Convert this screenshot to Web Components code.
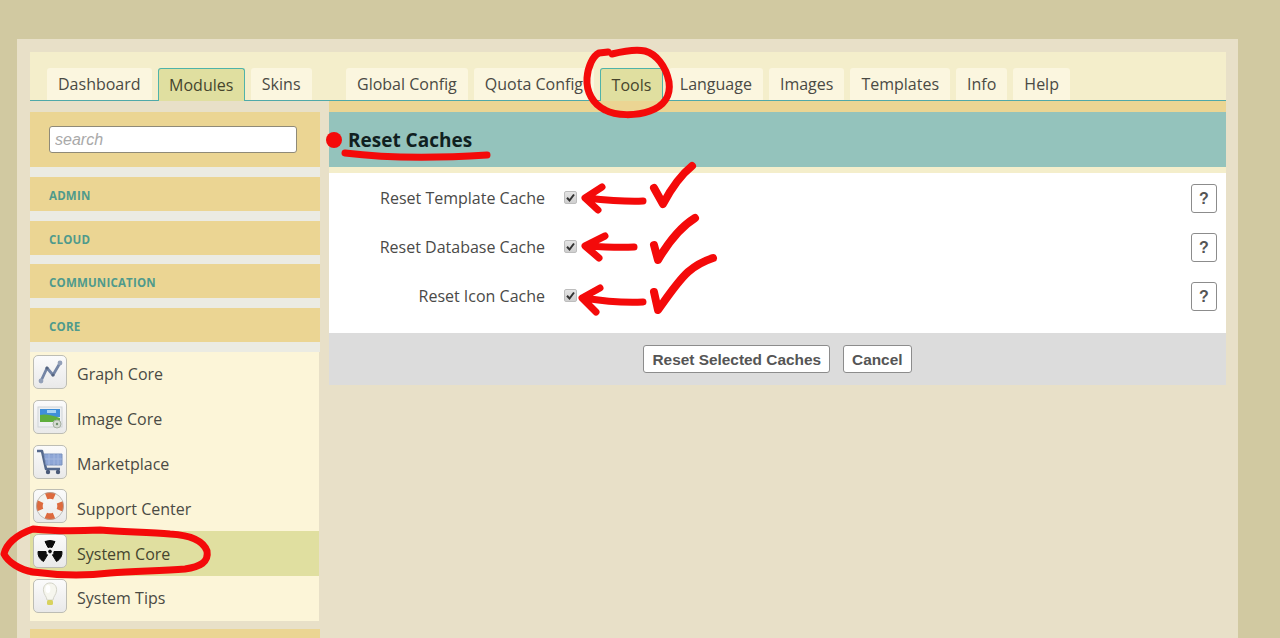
<!DOCTYPE html>
<html>
<head>
<meta charset="utf-8">
<title>Reset Caches</title>
<style>
html, body { margin: 0; height: 638px; overflow: hidden; background: #d1c9a1; }
body { font-family: "Open Sans", "Liberation Sans", sans-serif; color: #444; padding-top: 39px; box-sizing: border-box; }
</style>
</head>
<body>
<admin-shell>
    <tab-bar slot="left-tabs">
        <tab-item>Dashboard</tab-item>
        <tab-item active>Modules</tab-item>
        <tab-item>Skins</tab-item>
    </tab-bar>
    <module-sidebar slot="sidebar">
        <search-box slot="search"></search-box>
        <group-head slot="groups">ADMIN</group-head>
        <group-head slot="groups">CLOUD</group-head>
        <group-head slot="groups">COMMUNICATION</group-head>
        <group-head slot="groups">CORE</group-head>
        <module-item icon="graph">Graph Core</module-item>
        <module-item icon="image">Image Core</module-item>
        <module-item icon="cart">Marketplace</module-item>
        <module-item icon="buoy">Support Center</module-item>
        <module-item icon="radiation" active>System Core</module-item>
        <module-item icon="bulb">System Tips</module-item>
    </module-sidebar>
    <tab-bar slot="right-tabs">
        <tab-item>Global Config</tab-item>
        <tab-item>Quota Config</tab-item>
        <tab-item active>Tools</tab-item>
        <tab-item>Language</tab-item>
        <tab-item>Images</tab-item>
        <tab-item>Templates</tab-item>
        <tab-item>Info</tab-item>
        <tab-item>Help</tab-item>
    </tab-bar>
    <config-panel slot="content" heading="Reset Caches">
        <config-row>Reset Template Cache</config-row>
        <config-row>Reset Database Cache</config-row>
        <config-row>Reset Icon Cache</config-row>
        <push-button slot="actions">Reset Selected Caches</push-button>
        <push-button slot="actions">Cancel</push-button>
    </config-panel>
</admin-shell>
<red-marks></red-marks>

<script>
class adminShell extends HTMLElement {
    constructor() {
        super();
        this.shadowDOM = this.attachShadow({mode: "open"});
    }

    connectedCallback() {
        this.shadowDOM.innerHTML = `
        <style>
        :host {
            display: block;
            box-sizing: border-box;
            width: 1221px;
            height: 599px;
            margin-left: 17px;
            padding: 13px 12px 0 13px;
            background: #e8e0c8;
            overflow: hidden;
        }
        .cols {
            display: grid;
            grid-template-columns: 299px 897px;
        }
        .left-tabs { margin-bottom: 11px; }
        </style>
        <div class="cols">
            <div>
                <div class="left-tabs"><slot name="left-tabs"></slot></div>
                <slot name="sidebar"></slot>
            </div>
            <div>
                <slot name="right-tabs"></slot>
                <slot name="content"></slot>
            </div>
        </div>
        `;
    }
}

class tabBar extends HTMLElement {
    constructor() {
        super();
        this.shadowDOM = this.attachShadow({mode: "open"});
    }

    connectedCallback() {
        this.shadowDOM.innerHTML = `
        <style>
        :host {
            display: flex;
            box-sizing: border-box;
            height: 49px;
            padding-left: 17px;
            gap: 6px;
            align-items: flex-end;
            background: #f4eecb;
            border-bottom: 1px solid #4fa9a9;
        }
        </style>
        <slot></slot>
        `;
    }
}

class tabItem extends HTMLElement {
    constructor() {
        super();
        this.shadowDOM = this.attachShadow({mode: "open"});
    }

    connectedCallback() {
        this.shadowDOM.innerHTML = `
        <style>
        :host {
            display: block;
            box-sizing: border-box;
            height: 32px;
            padding: 0 11px;
            line-height: 32px;
            font-size: 16px;
            color: #4a4a44;
            background: #fbf6df;
            border-radius: 3px 3px 0 0;
            white-space: nowrap;
        }
        :host([active]) {
            height: 33px;
            margin-bottom: -1px;
            padding: 0 10.5px;
            line-height: 33px;
            background: #e0dfa0;
            border: 1px solid #4fb3a9;
            border-bottom: none;
            color: #46452c;
        }
        </style>
        <slot></slot>
        `;
    }
}

class moduleSidebar extends HTMLElement {
    constructor() {
        super();
        this.shadowDOM = this.attachShadow({mode: "open"});
    }

    connectedCallback() {
        this.shadowDOM.innerHTML = `
        <style>
        :host { display: block; width: 290px; }
        .groups {
            display: flex;
            flex-direction: column;
            gap: 9.67px;
            padding: 10px 0;
            background: #ebebe3;
        }
        .items { display: block; margin-right: 1px; background: #fcf5d8; }
        .next { height: 20px; margin-top: 8.2px; background: #ebd593; }
        </style>
        <slot name="search"></slot>
        <div class="groups"><slot name="groups"></slot></div>
        <div class="items"><slot></slot></div>
        <div class="next"></div>
        `;
    }
}

class searchBox extends HTMLElement {
    constructor() {
        super();
        this.shadowDOM = this.attachShadow({mode: "open"});
    }

    connectedCallback() {
        this.shadowDOM.innerHTML = `
        <style>
        :host {
            display: block;
            box-sizing: border-box;
            height: 55px;
            padding: 14px 23px 0 19px;
            background: #ebd593;
        }
        input {
            display: block;
            box-sizing: border-box;
            width: 248px;
            height: 27px;
            padding: 0 5px;
            border: 1px solid #8f8a78;
            border-radius: 3px;
            background: #fff;
            font: italic 16px "Liberation Sans", sans-serif;
            outline: none;
        }
        input::placeholder { color: #a9a9a9; opacity: 1; }
        </style>
        <input type="text" placeholder="search">
        `;
    }
}

class groupHead extends HTMLElement {
    constructor() {
        super();
        this.shadowDOM = this.attachShadow({mode: "open"});
    }

    connectedCallback() {
        this.shadowDOM.innerHTML = `
        <style>
        :host {
            display: block;
            box-sizing: border-box;
            height: 34px;
            padding-left: 19px;
            line-height: 37px;
            font-size: 11.5px;
            font-weight: 700;
            letter-spacing: 0.2px;
            color: #4f9a8c;
            background: #ebd593;
        }
        </style>
        <slot></slot>
        `;
    }
}

const moduleIcons = {
    graph: `<path d="M8 26 L14 13 L20 20 L27 8" fill="none" stroke="#7485a5" stroke-width="2.8" stroke-linejoin="round"/>
            <circle cx="8" cy="26" r="2.4" fill="#93a0b8"/><circle cx="14" cy="13" r="1.6" fill="#55647f"/>
            <circle cx="20" cy="20" r="1.6" fill="#55647f"/><circle cx="27" cy="8" r="2.4" fill="#93a0b8"/>`,
    image: `<rect x="5" y="7" width="24" height="20" fill="#eef0f2" stroke="#cfd3d6"/>
            <rect x="7" y="9" width="20" height="8" fill="#3f8fd8"/>
            <rect x="14" y="10" width="9" height="3" fill="#a7d3f3"/>
            <path d="M7 22 L7 15 Q14 13 27 18 L27 22 Z" fill="#5fae3c"/>
            <circle cx="24" cy="24" r="4" fill="#d5dbd2" stroke="#a7b0a3"/><circle cx="24" cy="24" r="1.2" fill="#6f8f6a"/>`,
    cart: `<path d="M4 6 H9 L13 24 H27" fill="none" stroke="#55698c" stroke-width="2.6" stroke-linejoin="round"/>
            <path d="M11 9 H29 V20 H13 Z" fill="#8ea6d6" stroke="#7b92bd"/>
            <path d="M16 9 V20 M21 9 V20 M25 9 V20 M12 14 H29" stroke="#a3b7de" stroke-width="1"/>
            <circle cx="15" cy="27" r="2.2" fill="#4a5a78"/><circle cx="25" cy="27" r="2.2" fill="#4a5a78"/>`,
    buoy: `<circle cx="17" cy="17" r="10.5" fill="none" stroke="#f2f2ee" stroke-width="6"/>
            <circle cx="17" cy="17" r="10.5" fill="none" stroke="#dd6a3e" stroke-width="6.4" stroke-dasharray="8.5 8" stroke-dashoffset="4.25"/>
            <circle cx="17" cy="17" r="13.6" fill="none" stroke="#a9a9a4" stroke-width=".7"/>`,
    radiation: `<g fill="#0c0c0c" stroke="#0c0c0c" stroke-width="1" stroke-linejoin="round">
            <path d="M12 7.5 Q17 5.5 22 7.5 L19 13.5 Q17 12.6 15 13.5 Z"/>
            <path d="M29 17.5 Q29.5 24 23.5 27.5 L19.5 21 Q21.2 20 21 17.5 Z"/>
            <path d="M5 17.5 Q4.5 24 10.5 27.5 L14.5 21 Q12.8 20 13 17.5 Z"/>
            <circle cx="17" cy="17.5" r="1.4"/></g>`,
    bulb: `<path d="M17 4 C12 4 10 8 10.5 12 C11 16 13.5 17 14 21 H20 C20.5 17 23 16 23.5 12 C24 8 22 4 17 4 Z" fill="#f6f6ee" stroke="#d4d4c8"/>
            <ellipse cx="15" cy="10" rx="2.4" ry="4" fill="#fff"/>
            <rect x="14" y="21" width="6" height="5" rx="1.5" fill="#d8d25e"/>`
};

class moduleItem extends HTMLElement {
    constructor() {
        super();
        this.shadowDOM = this.attachShadow({mode: "open"});
    }

    connectedCallback() {
        this.shadowDOM.innerHTML = `
        <style>
        :host {
            display: flex;
            align-items: center;
            box-sizing: border-box;
            height: 44.8px;
            padding-left: 3px;
            gap: 10px;
            font-size: 16px;
            color: #4a4a44;
        }
        :host([active]) { background: #e0dfa0; color: #45452f; }
        .icon {
            display: block;
            align-self: flex-start;
            box-sizing: border-box;
            width: 34px;
            height: 34px;
            margin-top: 3px;
            border: 1px solid #bdbdb4;
            border-radius: 5px;
            background: linear-gradient(#fbfbfb, #e9e9e9);
            flex: none;
        }
        svg { display: block; margin: -1px; }
        </style>
        <span class="icon"><svg width="34" height="34" viewBox="0 0 34 34">${moduleIcons[this.getAttribute("icon")]}</svg></span>
        <span><slot></slot></span>
        `;
    }
}

class configPanel extends HTMLElement {
    constructor() {
        super();
        this.shadowDOM = this.attachShadow({mode: "open"});
    }

    connectedCallback() {
        this.shadowDOM.innerHTML = `
        <style>
        :host { display: block; }
        .sand { height: 11px; background: #ebd593; }
        h2 {
            margin: 0;
            box-sizing: border-box;
            height: 55px;
            padding-left: 19px;
            line-height: 56px;
            font-size: 19px;
            font-weight: 700;
            color: #10201f;
            background: #94c3bc;
        }
        .cream { height: 6px; background: #f4eecb; }
        .rows { padding: 1px 0 12px; background: #fff; }
        .actions {
            display: flex;
            justify-content: center;
            gap: 13px;
            box-sizing: border-box;
            height: 52px;
            padding-top: 12px;
            background: #dcdcdc;
        }
        </style>
        <div class="sand"></div>
        <h2>${this.getAttribute("heading")}</h2>
        <div class="cream"></div>
        <div class="rows"><slot></slot></div>
        <div class="actions"><slot name="actions"></slot></div>
        `;
    }
}

class configRow extends HTMLElement {
    constructor() {
        super();
        this.shadowDOM = this.attachShadow({mode: "open"});
    }

    connectedCallback() {
        this.shadowDOM.innerHTML = `
        <style>
        :host {
            display: flex;
            align-items: center;
            box-sizing: border-box;
            height: 49px;
            padding-right: 9px;
            font-size: 16px;
            color: #4a4a48;
        }
        .label { width: 216px; margin-top: -1px; text-align: right; white-space: nowrap; }
        .box {
            box-sizing: border-box;
            width: 13px;
            height: 13px;
            margin: -3px 0 0 19px;
            border: 1px solid #bdbdbd;
            border-radius: 2px;
            background: linear-gradient(#e4e4e4, #cfcfcf);
        }
        .box svg { display: block; margin: -1px; }
        .help {
            box-sizing: border-box;
            width: 26px;
            height: 29px;
            margin-left: auto;
            border: 1px solid #8c8c8c;
            border-radius: 3px;
            background: #fff;
            text-align: center;
            font: 700 16px/27px "Liberation Sans", sans-serif;
            color: #555;
        }
        </style>
        <span class="label"><slot></slot></span>
        <span class="box"><svg width="13" height="13" viewBox="0 0 13 13"><path d="M3 6.8 L5.5 9.5 L10 3.5" fill="none" stroke="#333" stroke-width="2"/></svg></span>
        <span class="help">?</span>
        `;
    }
}

class pushButton extends HTMLElement {
    constructor() {
        super();
        this.shadowDOM = this.attachShadow({mode: "open"});
    }

    connectedCallback() {
        this.shadowDOM.innerHTML = `
        <style>
        :host {
            display: block;
            box-sizing: border-box;
            height: 28px;
            padding: 0 8px;
            border: 1px solid #8c8c8c;
            border-radius: 3px;
            background: #fff;
            font: 700 15.4px/28px "Liberation Sans", sans-serif;
            color: #555;
            white-space: nowrap;
        }
        </style>
        <slot></slot>
        `;
    }
}

// hand drawn red marks lying over the screenshot
class redMarks extends HTMLElement {
    constructor() {
        super();
        this.shadowDOM = this.attachShadow({mode: "open"});
    }

    connectedCallback() {
        this.shadowDOM.innerHTML = `
        <style>
        :host { position: absolute; top: 0; left: 0; width: 1280px; height: 638px; pointer-events: none; }
        svg { display: block; }
        path { fill: none; stroke: #f40a0a; stroke-width: 7; stroke-linecap: round; stroke-linejoin: round; }
        .check { stroke-width: 8; }
        </style>
        <svg width="1280" height="638" viewBox="0 0 1280 638">
            <path d="M612 54 C624 51 636 49 645 51 C656 54 666 66 669 82 C671 96 664 106 650 111 C636 116 616 116 605 110 C593 104 586 92 587 78 C588 66 593 56 599 53 L608 52"/>
            <circle cx="334" cy="140" r="8" fill="#f40a0a"/>
            <path d="M345 153 C385 158 440 158 487 155"/>
            <path d="M643 201 C625 202 605 200 586 198 M602 187 L585 198 L598 210"/>
            <path class="check" d="M654 188 L663 204 C672 187 682 174 692 166"/>
            <path d="M634 247 C618 248 602 247 586 246 M605 236 L585 246 L599 258"/>
            <path class="check" d="M654 245 L658 260 C668 243 682 226 695 218"/>
            <path d="M643 302 C622 303 602 301 583 298 M600 288 L582 298 L596 312"/>
            <path class="check" d="M654 292 L658 310 C668 296 678 281 688 272 C696 265 704 261 713 258"/>
            <path d="M33 529 C60 532 80 531 100 530 C125 532 150 532 170 534 C188 535 203 540 207 551 C209 562 200 567 185 569 C160 571 135 571 110 573 C85 576 55 575 33 572 C20 570 8 562 4 554 C6 545 15 535 33 529 Z"/>
        </svg>
        `;
    }
}

customElements.define('admin-shell', adminShell);
customElements.define('tab-bar', tabBar);
customElements.define('tab-item', tabItem);
customElements.define('module-sidebar', moduleSidebar);
customElements.define('search-box', searchBox);
customElements.define('group-head', groupHead);
customElements.define('module-item', moduleItem);
customElements.define('config-panel', configPanel);
customElements.define('config-row', configRow);
customElements.define('push-button', pushButton);
customElements.define('red-marks', redMarks);
</script>
</body>
</html>
